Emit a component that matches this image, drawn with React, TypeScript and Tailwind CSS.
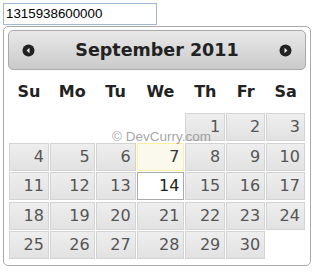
import React from 'react';

const cols = ['w-[41px]', 'w-[46px]', 'w-[41px]', 'w-[49px]', 'w-[41px]', 'w-[40px]', 'w-[40px]'];
const dayNames = ['Su', 'Mo', 'Tu', 'We', 'Th', 'Fr', 'Sa'];

// September 2011 starts on a Thursday
const weeks: (number | null)[][] = [
  [null, null, null, null, 1, 2, 3],
  [4, 5, 6, 7, 8, 9, 10],
  [11, 12, 13, 14, 15, 16, 17],
  [18, 19, 20, 21, 22, 23, 24],
  [25, 26, 27, 28, 29, 30, null],
];

function Arrow({ dir }: { dir: 'left' | 'right' }) {
  return (
    <svg width="13" height="13" viewBox="0 0 13 13">
      <circle cx="6.5" cy="6.5" r="6" fill="#222" />
      {dir === 'left' ? (
        <path d="M7.5 3.8 L4.6 6.5 L7.5 9.2 Z" fill="#eee" />
      ) : (
        <path d="M5.5 3.8 L8.4 6.5 L5.5 9.2 Z" fill="#eee" />
      )}
    </svg>
  );
}

function DayCell({ day }: { day: number | null }) {
  if (day === null) return <div className="h-[28px] mr-px" />;
  let cls = 'border-[#d3d3d3] bg-gradient-to-b from-[#eeeeee] to-[#e2e2e2] text-[#555555]';
  if (day === 7) cls = 'border-[#fcefa1] bg-[#fbf9ee] text-[#363636]';
  if (day === 14) cls = 'border-[#aaaaaa] bg-white text-[#212121]';
  return (
    <div className={`h-[28px] mr-px border ${cls} flex items-center justify-end pr-[4px] text-[16px] leading-none`}>
      {day}
    </div>
  );
}

export default function App() {
  return (
    <div className="w-[323px] h-[273px] bg-white relative font-['DejaVu_Sans',sans-serif]">
      <div className="pt-[3px] pl-[3px]">
        <div className="w-[154px] h-[22px] border border-[#9fb8d3] flex items-center pl-[2px] text-[13.33px] text-black font-['Liberation_Sans',Arial,sans-serif]">
          1315938600000
        </div>
      </div>
      <div className="ml-[3px] mt-px w-[308px] h-[240px] border border-[#aaaaaa] rounded-[5px] pt-[3px] px-[4px]">
        <div className="h-[40px] border border-[#aaaaaa] rounded-[5px] bg-gradient-to-b from-[#e9e9e9] to-[#cacaca] flex items-center justify-between px-[13px]">
          <Arrow dir="left" />
          <span className="font-bold text-[17.5px] text-[#222222]">September 2011</span>
          <Arrow dir="right" />
        </div>
        <div className="pl-px">
          <div className="flex h-[43px] items-center">
            {dayNames.map((d, i) => (
              <div key={d} className={`${cols[i]} pr-px text-center font-bold text-[16px] text-[#222222]`}>
                {d}
              </div>
            ))}
          </div>
          <div className="flex flex-col gap-y-[1.6px]">
            {weeks.map((w, wi) => (
              <div key={wi} className="flex">
                {w.map((d, i) => (
                  <div key={i} className={cols[i]}>
                    <DayCell day={d} />
                  </div>
                ))}
              </div>
            ))}
          </div>
        </div>
      </div>
      <div className="absolute left-[112px] top-[127px] text-[13.5px] text-[#8c8c8c]/80 font-['Liberation_Sans',Arial,sans-serif] pointer-events-none">
        © DevCurry.com
      </div>
    </div>
  );
}
